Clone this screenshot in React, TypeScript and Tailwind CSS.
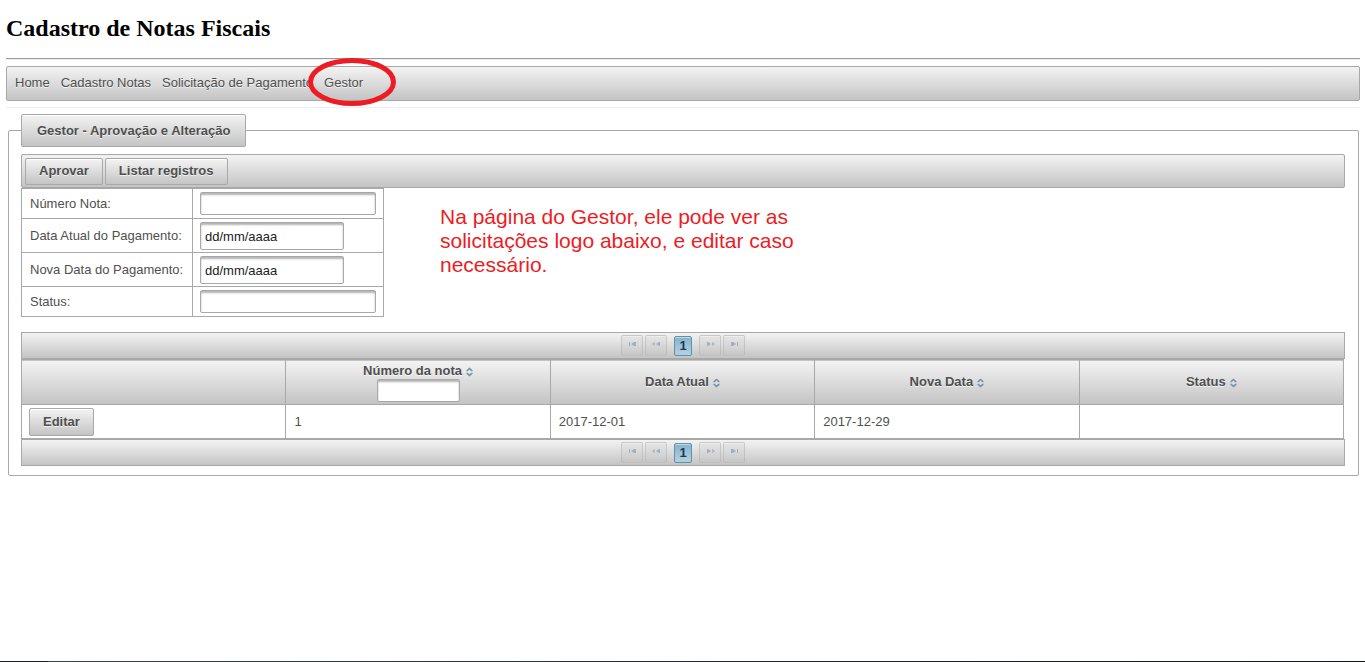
import type { ReactNode } from 'react';

const surface =
  'border border-[#a8a8a8] bg-[#c4c4c4] bg-linear-to-b from-white/80 to-white/0';
const buttonStyle = `${surface} rounded-[2px] font-bold leading-4 text-[#4f4f4f] shadow-[inset_0_1px_0_#fff] [text-shadow:0_1px_0_rgba(255,255,255,0.7)]`;
const inputStyle =
  'block rounded-[2px] border border-[#a8a8a8] bg-white px-1 text-[#222] shadow-[inset_0_2px_2px_#b4b4b4] outline-none placeholder:text-[#222]';

const menuItems = ['Home', 'Cadastro Notas', 'Solicitação de Pagamento', 'Gestor'];

const fields = [
  { id: 'numero', label: 'Número Nota:', date: false },
  { id: 'dataAtual', label: 'Data Atual do Pagamento:', date: true },
  { id: 'novaData', label: 'Nova Data do Pagamento:', date: true },
  { id: 'status', label: 'Status:', date: false },
];

function SortIcon() {
  return (
    <svg className="ml-1 inline-block align-[-2px]" width="7" height="10" viewBox="0 0 7 10" fill="none" stroke="#6f93a6" strokeWidth="1.5" aria-hidden="true">
      <path d="M1.200 4.300V3.600L3.500 1.500 5.800 3.600V4.300M1.200 5.700V6.400L3.500 8.500 5.800 6.400V5.700" />
    </svg>
  );
}

function PagerButton({ label, children }: { label: string; children: ReactNode }) {
  return (
    <button
      type="button"
      disabled
      aria-label={label}
      className="flex h-[21px] w-[22px] justify-center rounded-[2px] border border-[#a8a8a8]/45 bg-[#c4c4c4]/35 bg-linear-to-b from-white/20 to-white/0 pt-[5px] shadow-[inset_0_1px_0_rgba(255,255,255,0.35)]"
    >
      <svg width="9" height="6" viewBox="0 0 9 6" fill="#9fb2bc" aria-hidden="true">
        {children}
      </svg>
    </button>
  );
}

function Paginator() {
  return (
    <nav aria-label="Paginação" className={`${surface} flex h-[27px] items-center justify-center gap-[7px]`}>
      <div className="flex gap-[2px]">
        <PagerButton label="Primeira página">
          <path d="M1 1h1v4H1zM3 3l3-2h2v4H6z" />
        </PagerButton>
        <PagerButton label="Página anterior">
          <path d="M0 3l3-2v1.200L2 3l1 .8V5zM4 3l3-2h1v4H7z" />
        </PagerButton>
      </div>
      <button
        type="button"
        aria-current="page"
        className="h-5 w-[18px] rounded-[2px] border border-[#5f93ab] bg-[#85b2cb] bg-linear-to-b from-white/0 to-white/40 font-bold leading-4 text-[#1c3b50] shadow-[inset_0_1px_0_rgba(255,255,255,0.5)]"
      >
        1
      </button>
      <div className="flex gap-[2px]">
        <PagerButton label="Próxima página">
          <path d="M1 1h1l3 2-3 2H1zM6 1l3 2-3 2V3.800L7 3l-1-.8z" />
        </PagerButton>
        <PagerButton label="Última página">
          <path d="M1 1h2l3 2-3 2H1zM7 1h1v4H7z" />
        </PagerButton>
      </div>
    </nav>
  );
}

export default function App() {
  return (
    <div className="flex min-h-screen flex-col bg-white font-['Liberation_Sans',Arial,sans-serif] text-[13px] leading-4 text-[#4f4f4f]">
      <div className="pr-[5px] pl-[6px]">
        <h1 className="pt-[14px] pb-4 font-['Liberation_Serif','Times_New_Roman',serif] text-2xl leading-7 font-bold text-black">
          Cadastro de Notas Fiscais
        </h1>
        <hr className="h-[2px] border-t border-b border-t-[#9a9a9a] border-b-[#eee]" />

        <nav className={`${surface} mt-[6px] flex h-[35px] items-center gap-[11px] rounded-[2px] px-2 pb-[2px]`}>
          {menuItems.map((item) => (
            <span key={item} className="relative">
              <a href="#" className="[text-shadow:0_1px_0_rgba(255,255,255,0.7)]">{item}</a>
              {item === 'Gestor' && (
                <svg className="pointer-events-none absolute -top-[17px] -left-4 h-12 w-[88px] max-w-none" viewBox="0 0 88 48" fill="none" aria-hidden="true">
                  <ellipse cx="44" cy="24" rx="41.500" ry="21.500" stroke="#ed1c24" strokeWidth="5" />
                </svg>
              )}
            </span>
          ))}
        </nav>
        <hr className="mt-[6px] border-t border-[#eee]" />
      </div>

      <fieldset className="mt-[6px] mr-[6px] ml-2 rounded-[2px] border border-[#a8a8a8] pt-[7px] pr-[13px] pb-[9px] pl-3">
        <legend className={`${buttonStyle} px-[15px] pt-2 pb-[7px]`}>Gestor - Aprovação e Alteração</legend>

        <div className={`${surface} flex h-[34px] items-center gap-[2px] rounded-[2px] px-[3px]`}>
          <button type="button" className={`${buttonStyle} h-[27px] px-[13px]`}>Aprovar</button>
          <button type="button" className={`${buttonStyle} h-[27px] px-[13px]`}>Listar registros</button>
        </div>

        <div className="flex items-start gap-14">
          <table className="w-[363px] table-fixed border-collapse">
            <tbody>
              {fields.map(({ id, label, date }) => (
                <tr key={id} className={date ? 'h-[34px]' : 'h-[30px]'}>
                  <th scope="row" className="w-[171px] border border-[#a8a8a8] px-2 py-0 text-left font-normal whitespace-nowrap">
                    <label htmlFor={id}>{label}</label>
                  </th>
                  <td className="border border-[#a8a8a8] px-[7px] py-0">
                    <input
                      id={id}
                      type="text"
                      placeholder={date ? 'dd/mm/aaaa' : undefined}
                      className={`${inputStyle} ${date ? 'h-7 w-36 pt-[2px]' : 'h-[23px] w-full'}`}
                    />
                  </td>
                </tr>
              ))}
            </tbody>
          </table>
          <p className="w-[370px] pt-[17px] text-[21px] leading-6 text-[#ed1c24]">
            Na página do Gestor, ele pode ver as solicitações logo abaixo, e editar caso necessário.
          </p>
        </div>

        <div className="mt-[15px]">
          <Paginator />
          <div className="pr-px">
            <table className="w-full table-fixed border-collapse">
              <thead>
                <tr className={`${surface} h-[45px] font-bold [text-shadow:0_1px_0_rgba(255,255,255,0.7)]`}>
                  <td className="border border-[#a8a8a8]" />
                  <th scope="col" className="border border-[#a8a8a8] p-0">
                    <span>Número da nota</span>
                    <SortIcon />
                    <input type="text" aria-label="Filtrar por número da nota" className={`${inputStyle} mx-auto h-[23px] w-[83px]`} />
                  </th>
                  {['Data Atual', 'Nova Data', 'Status'].map((name) => (
                    <th key={name} scope="col" className="border border-[#a8a8a8] p-0">
                      <span>{name}</span>
                      <SortIcon />
                    </th>
                  ))}
                </tr>
              </thead>
              <tbody>
                <tr className="h-[34px]">
                  <td className="border border-[#a8a8a8] px-[7px] py-0">
                    <button type="button" className={`${buttonStyle} block h-7 px-[13px]`}>Editar</button>
                  </td>
                  <td className="border border-[#a8a8a8] px-2 py-0">1</td>
                  <td className="border border-[#a8a8a8] px-2 py-0">2017-12-01</td>
                  <td className="border border-[#a8a8a8] px-2 py-0">2017-12-29</td>
                  <td className="border border-[#a8a8a8] px-2 py-0" />
                </tr>
              </tbody>
            </table>
          </div>
          <Paginator />
        </div>
      </fieldset>

      <footer className="mt-auto flex h-px bg-linear-to-r from-[#2f4a5e] to-[#0d1424]">
        <div className="w-12 bg-[#17222c]" />
      </footer>
    </div>
  );
}
